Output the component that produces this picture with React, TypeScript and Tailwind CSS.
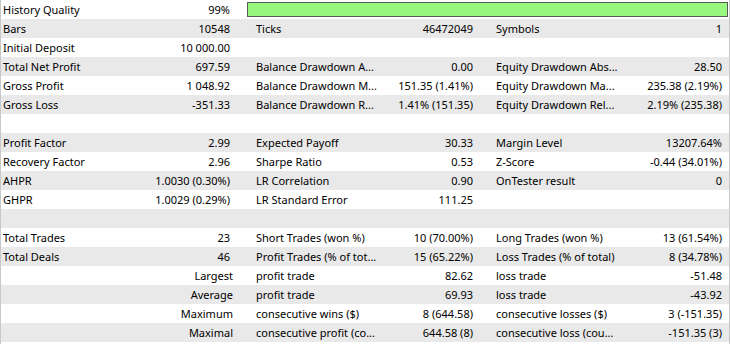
import React from "react";

type Cell = { l: string; v: string; right?: boolean };
type Row = [Cell | null, Cell | null, Cell | null] | "quality";

const rows: Row[] = [
  "quality",
  [{ l: "Bars", v: "10548" }, { l: "Ticks", v: "46472049" }, { l: "Symbols", v: "1" }],
  [{ l: "Initial Deposit", v: "10 000.00" }, null, null],
  [
    { l: "Total Net Profit", v: "697.59" },
    { l: "Balance Drawdown A...", v: "0.00" },
    { l: "Equity Drawdown Abs...", v: "28.50" },
  ],
  [
    { l: "Gross Profit", v: "1 048.92" },
    { l: "Balance Drawdown M...", v: "151.35 (1.41%)" },
    { l: "Equity Drawdown Ma...", v: "235.38 (2.19%)" },
  ],
  [
    { l: "Gross Loss", v: "-351.33" },
    { l: "Balance Drawdown R...", v: "1.41% (151.35)" },
    { l: "Equity Drawdown Rel...", v: "2.19% (235.38)" },
  ],
  [null, null, null],
  [
    { l: "Profit Factor", v: "2.99" },
    { l: "Expected Payoff", v: "30.33" },
    { l: "Margin Level", v: "13207.64%" },
  ],
  [
    { l: "Recovery Factor", v: "2.96" },
    { l: "Sharpe Ratio", v: "0.53" },
    { l: "Z-Score", v: "-0.44 (34.01%)" },
  ],
  [
    { l: "AHPR", v: "1.0030 (0.30%)" },
    { l: "LR Correlation", v: "0.90" },
    { l: "OnTester result", v: "0" },
  ],
  [{ l: "GHPR", v: "1.0029 (0.29%)" }, { l: "LR Standard Error", v: "111.25" }, null],
  [null, null, null],
  [
    { l: "Total Trades", v: "23" },
    { l: "Short Trades (won %)", v: "10 (70.00%)" },
    { l: "Long Trades (won %)", v: "13 (61.54%)" },
  ],
  [
    { l: "Total Deals", v: "46" },
    { l: "Profit Trades (% of tot...", v: "15 (65.22%)" },
    { l: "Loss Trades (% of total)", v: "8 (34.78%)" },
  ],
  [
    { l: "", v: "Largest", right: true },
    { l: "profit trade", v: "82.62" },
    { l: "loss trade", v: "-51.48" },
  ],
  [
    { l: "", v: "Average", right: true },
    { l: "profit trade", v: "69.93" },
    { l: "loss trade", v: "-43.92" },
  ],
  [
    { l: "", v: "Maximum", right: true },
    { l: "consecutive wins ($)", v: "8 (644.58)" },
    { l: "consecutive losses ($)", v: "3 (-151.35)" },
  ],
  [
    { l: "", v: "Maximal", right: true },
    { l: "consecutive profit (co...", v: "644.58 (8)" },
    { l: "consecutive loss (cou...", v: "-151.35 (3)" },
  ],
];

function C1({ c }: { c: Cell | null }) {
  if (!c) return <div className="w-[240px] shrink-0" />;
  if (c.right)
    return (
      <div className="w-[240px] shrink-0 flex justify-end pr-[8px]">
        <span>{c.v}</span>
      </div>
    );
  return (
    <div className="w-[240px] shrink-0 flex justify-between pl-[2px] pr-[11px]">
      <span>{c.l}</span>
      <span>{c.v}</span>
    </div>
  );
}

function C2({ c }: { c: Cell | null }) {
  if (!c) return <div className="w-[242px] shrink-0" />;
  return (
    <div className="w-[242px] shrink-0 flex justify-between pl-[15px] pr-[10px]">
      <span>{c.l}</span>
      <span>{c.v}</span>
    </div>
  );
}

function C3({ c }: { c: Cell | null }) {
  if (!c) return <div className="flex-1" />;
  return (
    <div className="flex-1 flex justify-between pl-[13px] pr-[7px]">
      <span>{c.l}</span>
      <span>{c.v}</span>
    </div>
  );
}

export default function App() {
  return (
    <div
      className="w-[730px] h-[344px] bg-white text-[11px] leading-[19px] text-[#000] border-x border-[#c8c8c8] overflow-hidden"
      style={{ fontFamily: '"Noto Sans", "Open Sans", sans-serif' }}
    >
      {rows.map((r, i) => {
        const bg = i % 2 === 1 ? "bg-[#e9e9e9]" : "bg-white";
        if (r === "quality")
          return (
            <div key={i} className={`flex h-[19px] ${bg}`}>
              <C1 c={{ l: "History Quality", v: "99%" }} />
              <div className="flex-1 pl-[6px] pr-[1px] pt-[2px]">
                <div className="h-[15px] bg-[#98f77f] border border-[#5a5a5a]" />
              </div>
            </div>
          );
        return (
          <div key={i} className={`flex h-[19px] whitespace-nowrap ${bg}`}>
            <C1 c={r[0]} />
            <C2 c={r[1]} />
            <C3 c={r[2]} />
          </div>
        );
      })}
    </div>
  );
}
